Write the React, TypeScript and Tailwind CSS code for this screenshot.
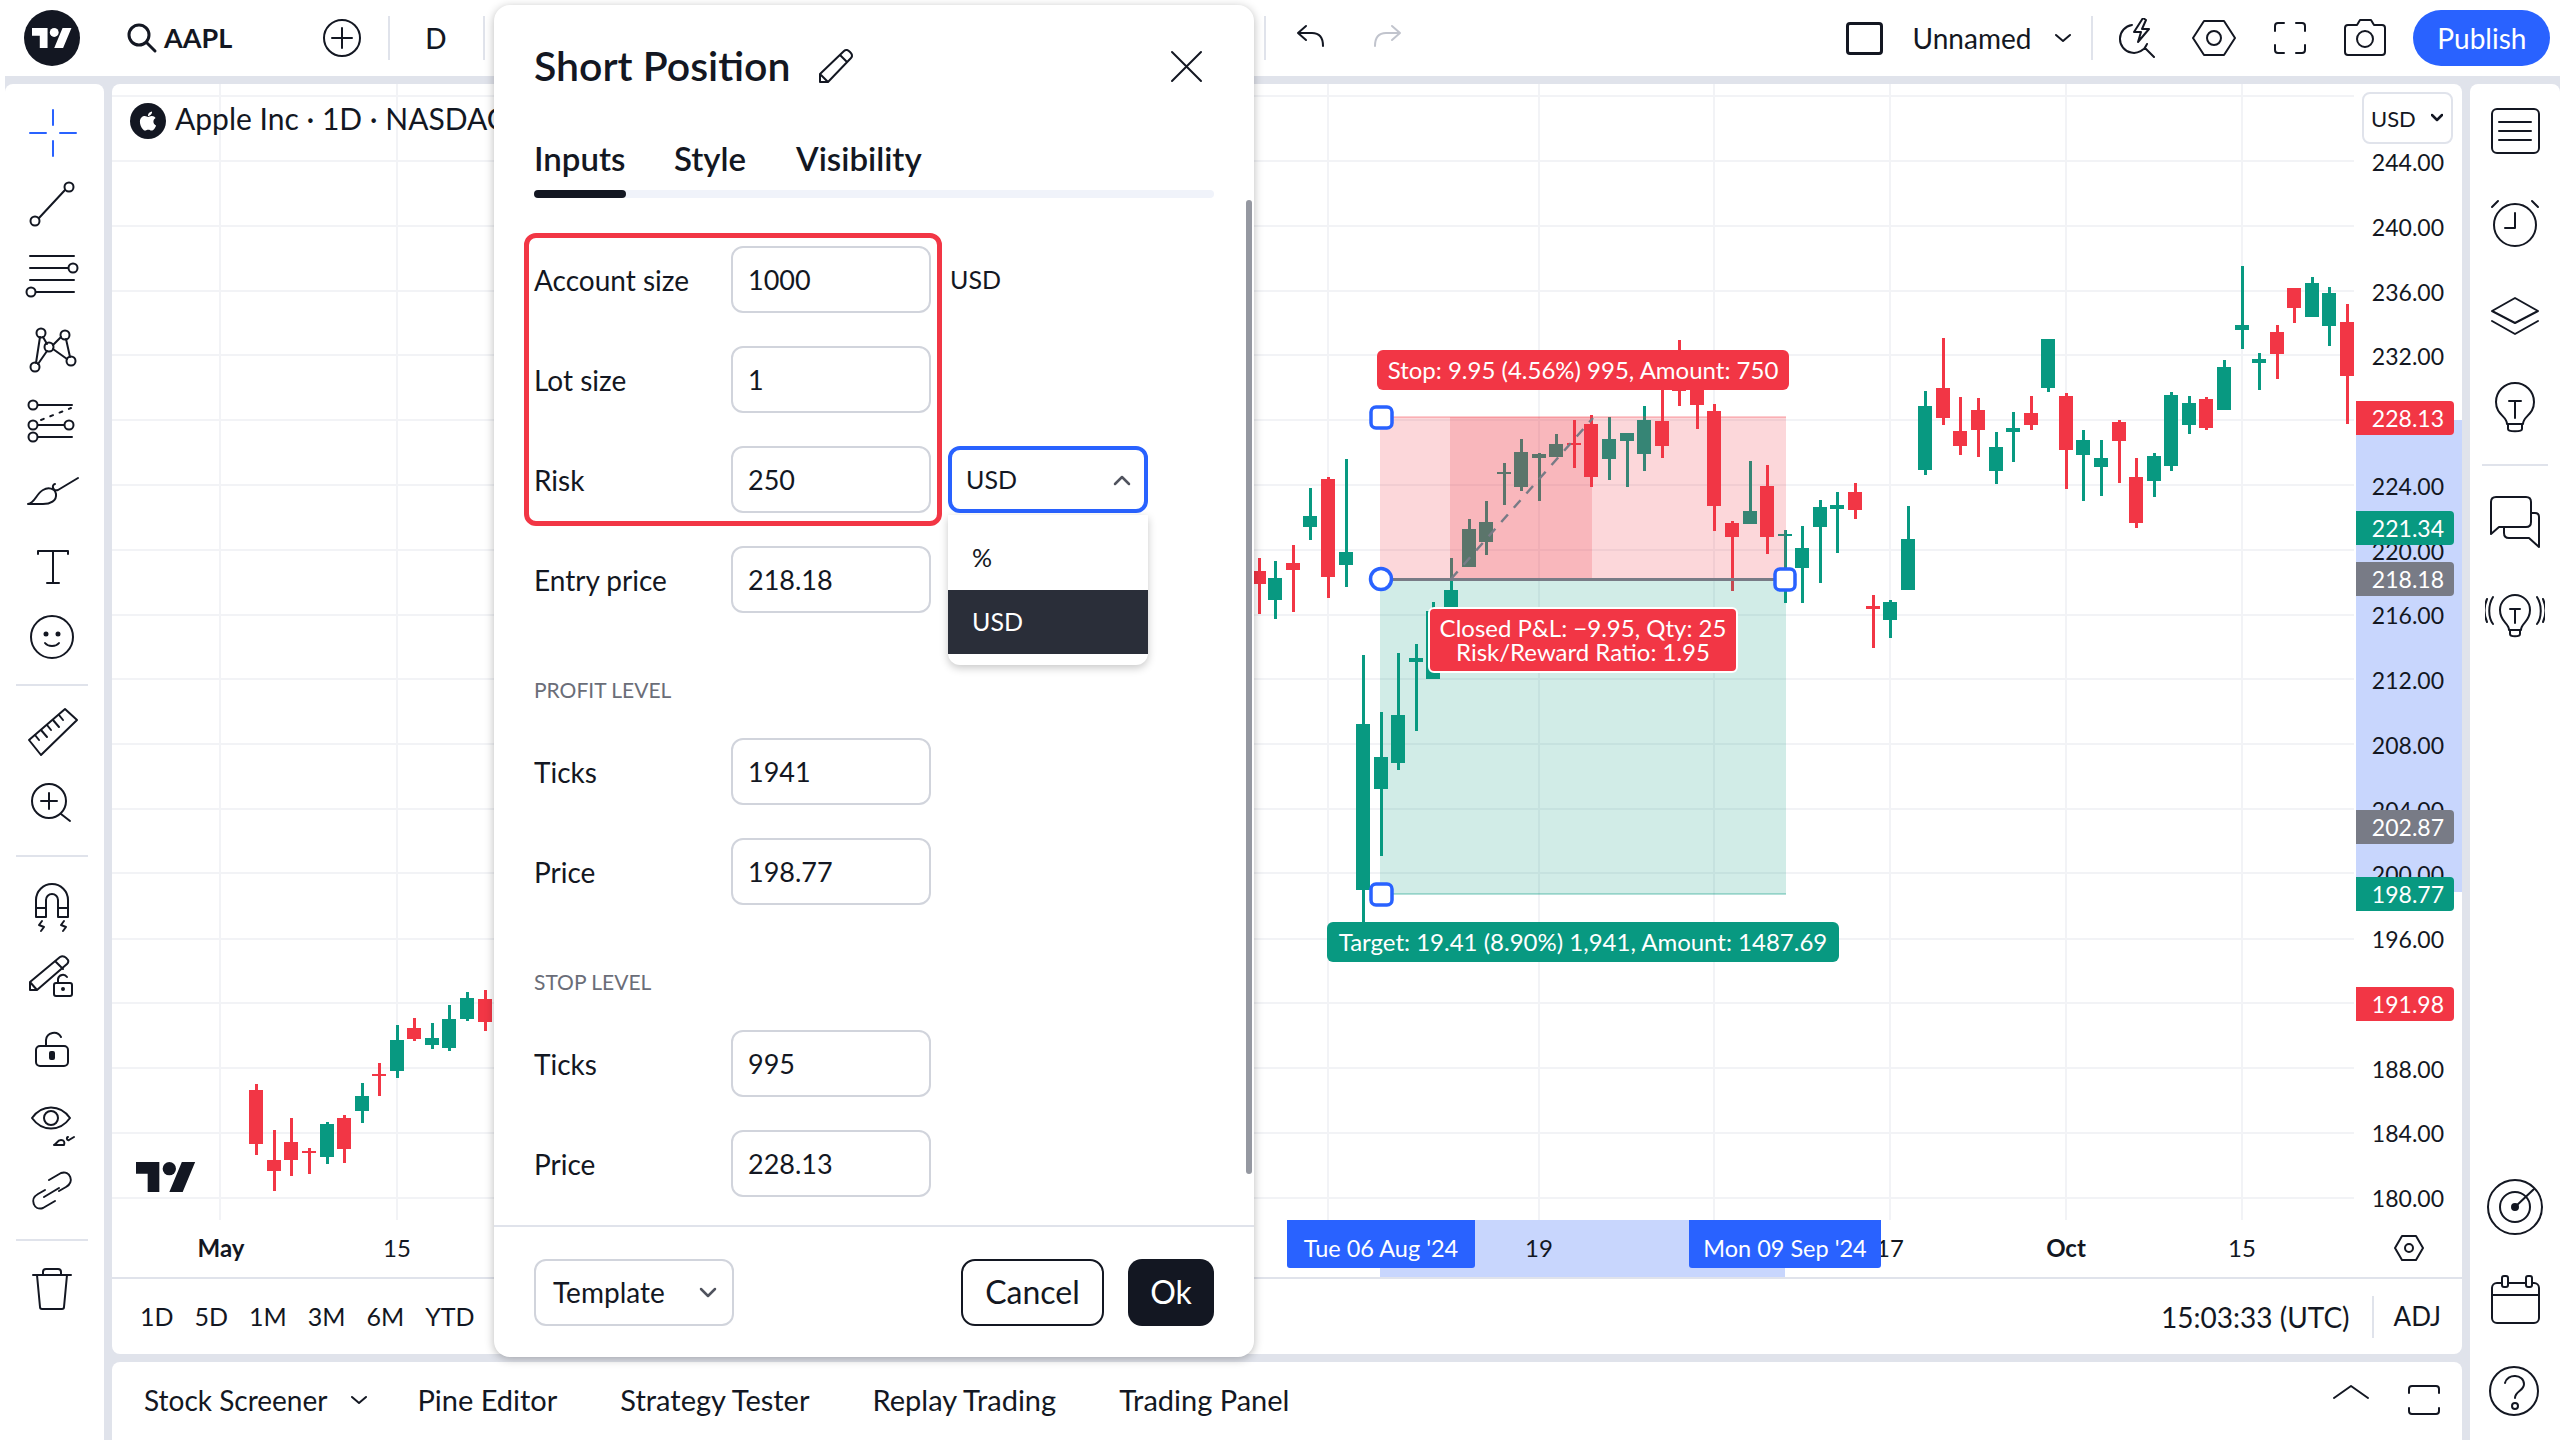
import React from 'react';
import { FaApple } from 'react-icons/fa';

const RED = '#f23645';
const GREEN = '#089981';

// x, wick top, wick bottom, body top, body bottom, red? (page coordinates)
type Candle = [number, number, number, number, number, 0 | 1];
const CANDLES: Candle[] = [
  [256, 1084, 1155, 1090, 1144, 1], [274, 1130, 1191, 1160, 1171, 1], [291, 1118, 1176, 1142, 1160, 1],
  [309, 1148, 1174, 1151, 1153, 1], [327, 1122, 1164, 1124, 1157, 0], [344, 1115, 1163, 1118, 1149, 1],
  [362, 1083, 1123, 1096, 1111, 0], [379, 1063, 1096, 1074, 1076, 1], [397, 1025, 1078, 1040, 1071, 0],
  [414, 1018, 1041, 1028, 1039, 1], [432, 1023, 1049, 1038, 1045, 0], [449, 1005, 1051, 1019, 1048, 0],
  [467, 992, 1021, 998, 1019, 0], [485, 990, 1031, 999, 1022, 1],
  [1259, 558, 614, 571, 584, 1], [1275, 561, 619, 578, 600, 0], [1293, 545, 612, 563, 570, 1],
  [1310, 488, 540, 516, 527, 0], [1328, 477, 598, 479, 577, 1], [1346, 459, 587, 552, 565, 0],
  [1363, 655, 922, 724, 890, 0], [1381, 712, 856, 757, 789, 0], [1398, 653, 770, 715, 763, 0],
  [1416, 644, 731, 658, 662, 0], [1433, 602, 679, 611, 679, 0], [1451, 558, 608, 590, 608, 0],
  [1469, 519, 567, 529, 567, 0], [1486, 501, 555, 522, 542, 0], [1504, 463, 505, 472, 474, 0],
  [1521, 439, 491, 452, 487, 0], [1539, 453, 501, 454, 458, 0], [1556, 434, 457, 444, 457, 0],
  [1574, 420, 468, 443, 445, 1], [1591, 415, 487, 424, 477, 1], [1609, 417, 480, 439, 459, 0],
  [1627, 433, 487, 433, 441, 0], [1644, 406, 471, 420, 454, 0], [1662, 385, 458, 421, 446, 1],
  [1679, 340, 406, 372, 391, 1], [1697, 372, 429, 378, 405, 1], [1714, 404, 531, 411, 506, 1],
  [1732, 521, 591, 523, 537, 1], [1750, 461, 524, 511, 524, 0], [1767, 465, 554, 486, 537, 1],
  [1785, 530, 603, 534, 536, 0], [1802, 526, 603, 548, 568, 0], [1820, 500, 583, 507, 527, 0],
  [1837, 492, 553, 505, 509, 0], [1855, 483, 519, 492, 510, 1], [1873, 595, 648, 606, 609, 1],
  [1890, 600, 638, 602, 620, 0], [1908, 506, 590, 539, 590, 0], [1925, 391, 475, 406, 470, 0],
  [1943, 338, 425, 388, 418, 1], [1960, 397, 455, 431, 446, 1], [1978, 398, 457, 410, 430, 1],
  [1996, 432, 484, 447, 471, 0], [2013, 412, 462, 428, 432, 0], [2031, 396, 430, 413, 425, 1],
  [2048, 339, 392, 339, 388, 0], [2066, 393, 489, 396, 450, 1], [2083, 430, 501, 440, 455, 0],
  [2101, 440, 496, 458, 467, 0], [2119, 420, 483, 422, 441, 1], [2136, 458, 528, 477, 523, 1],
  [2154, 453, 497, 456, 481, 0], [2171, 392, 471, 395, 466, 0], [2189, 396, 434, 403, 425, 0],
  [2206, 397, 430, 399, 428, 1], [2224, 360, 410, 367, 410, 0], [2242, 266, 349, 325, 330, 0],
  [2259, 353, 390, 359, 363, 0], [2277, 325, 379, 332, 354, 1], [2294, 288, 323, 288, 308, 1],
  [2312, 277, 317, 283, 317, 0], [2329, 287, 346, 293, 326, 0], [2347, 304, 424, 322, 376, 1],
];

const GRID_X = [220, 397, 1328, 1539, 1714, 1890, 2066, 2242];
const GRID_Y = [96, 161, 226, 291, 355, 420, 485, 550, 615, 679, 744, 809, 873, 939, 1003, 1068, 1133, 1198];

const PRICES = [244, 240, 236, 232, 224, 220, 216, 212, 208, 204, 200, 196, 188, 184, 180];
const priceY = (p: number) => 162 + (244 - p) * 16.19;

const TAGS = [
  { label: '228.13', top: 401, bg: RED, h: 34 },
  { label: '221.34', top: 511, bg: GREEN, h: 34 },
  { label: '218.18', top: 562, bg: '#787b86', h: 34 },
  { label: '202.87', top: 810, bg: '#787b86', h: 34 },
  { label: '198.77', top: 877, bg: GREEN, h: 34 },
  { label: '191.98', top: 987, bg: RED, h: 34 },
];

const Ico: React.FC<{ size?: number; color?: string; sw?: number; children: React.ReactNode }> = ({
  size = 60,
  color = '#131722',
  sw = 2,
  children,
}) => (
  <svg width={size} height={size} viewBox={`0 0 ${size} ${size}`} fill="none" stroke={color} strokeWidth={sw} strokeLinecap="round" strokeLinejoin="round">
    {children}
  </svg>
);

const TvMark: React.FC<{ w: number; h: number; fill: string }> = ({ w, h, fill }) => (
  <svg width={w} height={h} viewBox="0 4 36 18" fill={fill}>
    <path d="M14 22H7V11H0V4h14v18zM28 22h-8l7.5-18h8L28 22z" />
    <circle cx="20" cy="8" r="4" />
  </svg>
);

const TOOLS_A: React.ReactNode[] = [
  <Ico key="cross" color="#2962ff">
    <path d="M31 7v15M31 38v15M8 30h16M38 30h16" />
  </Ico>,
  <Ico key="line">
    <g transform="translate(0 -3)">
      <circle cx="13" cy="49" r="4.5" /><circle cx="47" cy="15" r="4.5" /><path d="M17 46 43 18" />
    </g>
  </Ico>,
  <Ico key="lines">
    <path d="M8 9h44M8 21h38M8 33h44M14 45h38" /><circle cx="51" cy="21" r="4.5" /><circle cx="9" cy="45" r="4.5" />
  </Ico>,
  <Ico key="xabcd">
    <circle cx="19" cy="14" r="4.5" /><circle cx="43" cy="16" r="4.5" /><circle cx="27" cy="28" r="4.5" /><circle cx="13" cy="48" r="4.5" /><circle cx="49" cy="42" r="4.5" />
    <path d="M18 18 14 44M21 18l4 7M16 45l9-13M31 26l8-8M31 30l14 10M44 20l4 18" />
  </Ico>,
  <Ico key="fib">
    <g transform="translate(0 4)">
      <path d="M16 10h34M16 30h26M16 42h34" /><circle cx="11" cy="10" r="4.5" /><circle cx="11" cy="30" r="4.5" /><circle cx="47" cy="30" r="4.5" /><circle cx="11" cy="42" r="4.5" />
      <path d="M19 25l30-12" strokeDasharray="3 7" />
    </g>
  </Ico>,
  <Ico key="brush">
    <path d="M6 41c7-1 8-10 15-14 5-3 12-2 13 4 1 7-6 10-13 10H6ZM33 21c-4 1-2 8 3 6l20-12" />
  </Ico>,
  <Ico key="text">
    <path d="M16 19v-3h30v3M31 16v32M25 48h12" />
  </Ico>,
  <Ico key="smile">
    <circle cx="30" cy="30" r="21" /><circle cx="24" cy="27" r="1.5" fill="#131722" /><circle cx="36" cy="27" r="1.5" fill="#131722" /><path d="M23 36c3 4 11 4 14 0" />
  </Ico>,
];

const TOOLS_B: React.ReactNode[] = [
  <Ico key="ruler">
    <g transform="translate(0 1)">
      <path d="M7 37 43 6l12 11-36 35L7 37Z" />
      <path d="m13 32 4 5M19 27l6 7M25 22l4 5M31 17l6 7M37 12l4 5" />
    </g>
  </Ico>,
  <Ico key="zoom">
    <circle cx="27" cy="27" r="17" /><path d="M27 19v16M19 27h16M39 40l9 7" />
  </Ico>,
];

const TOOLS_C: React.ReactNode[] = [
  <Ico key="magnet">
    <g transform="translate(0 3)">
      <path d="M14 37V20a16 16 0 0 1 32 0v17H36V20a6 6 0 0 0-12 0v17H14ZM14 28h10M36 28h10" />
      <path d="M20 41l-3 4 5 2-3 4M42 41l-3 4 5 2-3 4" />
    </g>
  </Ico>,
  <Ico key="pencil-lock">
    <g transform="translate(0 -4)">
      <path d="M8 46V38L38 13c3-2 6 0 8 3 1 2 0 3-1 4L15 46H8ZM33 17l8 8M8 38l7 8" />
      <rect x="32" y="39" width="18" height="13" rx="2" /><path d="M36 39v-4a5 5 0 0 1 9-2" /><circle cx="41" cy="45" r="1" fill="#131722" />
    </g>
  </Ico>,
  <Ico key="lock">
    <rect x="14" y="27" width="32" height="20" rx="4" /><path d="M24 27v-6a8 8 0 0 1 15-3" /><rect x="28" y="33" width="4" height="7" fill="#131722" rx="1" />
  </Ico>,
  <Ico key="eye">
    <g transform="translate(0 6)">
      <path d="M10 22c10-14 28-14 38 0-10 14-28 14-38 0Z" /><circle cx="29" cy="22" r="7" />
      <path d="M32 49c3-1 3-5 7-5 3 0 4 2 3 5h-10ZM46 41c-2 0-1 4 1 3l5-3" />
    </g>
  </Ico>,
  <Ico key="link">
    <path d="M23 29 16 33c-9 5-4 17 5 14l12-7M37 30l7-4c9-5 4-17-5-14l-12 7M22 36l15-9" />
  </Ico>,
];

const RIGHT_TOP: React.ReactNode[] = [
  <Ico key="list">
    <rect x="7" y="8" width="47" height="44" rx="5" /><path d="M14 21h32M14 30h32M14 39h32" />
  </Ico>,
  <Ico key="alarm">
    <circle cx="30" cy="32" r="21" /><path d="M30 20v15H20M7 14l6-6M53 14l-6-6" />
  </Ico>,
  <Ico key="layers">
    <path d="m30 13 23 13-23 12L7 26l23-13ZM7 36l23 13 23-13" />
  </Ico>,
  <Ico key="bulb">
    <path d="M22 47c0-8-11-9-11-22a19 19 0 0 1 38 0c0 13-11 14-11 22H22ZM23 47v5c0 3 14 3 14 0v-5M24 24h12M30 24v17" />
  </Ico>,
];

const RIGHT_MID: React.ReactNode[] = [
  <Ico key="chat">
    <path d="M6 42V10c0-3 2-5 5-5h30c3 0 5 2 5 5v20c0 3-2 5-5 5H14l-8 7ZM46 21h4c3 0 4 2 4 4v30l-10-9H24c-3 0-5-2-5-5v-6" />
  </Ico>,
  <Ico key="signal">
    <path d="M24 48c0-7-9-8-9-20a15 15 0 0 1 30 0c0 12-9 13-9 20H24ZM25 48v4c0 3 10 3 10 0v-4M25 27h10M30 27v14M8 15c-5 8-5 20 0 27M2 17c-3 7-3 16 0 23M52 15c5 8 5 20 0 27M58 17c3 7 3 16 0 23" />
  </Ico>,
];

const RIGHT_BOTTOM: React.ReactNode[] = [
  <Ico key="target">
    <circle cx="30" cy="30" r="27" /><circle cx="30" cy="30" r="15" /><circle cx="30" cy="30" r="3" fill="#131722" /><path d="M30 30 49 12" />
  </Ico>,
  <Ico key="calendar">
    <rect x="7" y="14" width="47" height="40" rx="5" /><path d="M7 26h47" /><rect x="17" y="7" width="6" height="11" rx="2" fill="#fff" /><rect x="41" y="7" width="6" height="11" rx="2" fill="#fff" />
  </Ico>,
  <Ico key="help">
    <circle cx="29" cy="30" r="24" /><path d="M20 22c2-10 19-9 19 1 0 7-9 7-9 14" /><circle cx="30" cy="45" r="3" />
  </Ico>,
];

const Slot: React.FC<{ h: string; children: React.ReactNode }> = ({ h, children }) => (
  <div className={`${h} flex items-center justify-center`}>{children}</div>
);

const ToolDivider: React.FC<{ h: string }> = ({ h }) => (
  <div className={`${h} flex items-center justify-center`}>
    <div className="h-[2px] w-[72px] bg-[#e0e3eb]" />
  </div>
);

const LeftToolbar = () => (
  <div className="w-[99px] shrink-0 rounded-t-[8px] bg-white pr-[5px] pt-[13px]">
    {TOOLS_A.map((t, i) => (
      <Slot key={i} h="h-[72px]">{t}</Slot>
    ))}
    <ToolDivider h="h-[23px]" />
    {TOOLS_B.map((t, i) => (
      <Slot key={i} h="h-[72px]">{t}</Slot>
    ))}
    <ToolDivider h="h-[31px]" />
    {TOOLS_C.map((t, i) => (
      <Slot key={i} h="h-[71px]">{t}</Slot>
    ))}
    <ToolDivider h="h-[28px]" />
    <Slot h="h-[72px]">
      <Ico>
        <path d="M11 15h38M15 15l3 32c0 1 1 2 2 2h20c1 0 2-1 2-2l3-32M21 15v-3c0-2 1-3 3-3h12c2 0 3 1 3 3v3" />
      </Ico>
    </Slot>
  </div>
);

const RightToolbar = () => (
  <div className="flex flex-1 flex-col rounded-t-[8px] bg-white pb-[3px] pt-[1px]">
    {RIGHT_TOP.map((t, i) => (
      <Slot key={i} h="h-[92px]">{t}</Slot>
    ))}
    <div className="flex h-[24px] items-center justify-center">
      <div className="h-[2px] w-[66px] bg-[#e0e3eb]" />
    </div>
    {RIGHT_MID.map((t, i) => (
      <Slot key={i} h="h-[90px]">{t}</Slot>
    ))}
    <div className="mt-auto">
      {RIGHT_BOTTOM.map((t, i) => (
        <Slot key={i} h="h-[92px]">{t}</Slot>
      ))}
    </div>
  </div>
);

const TopBar = () => (
  <div className="flex h-[76px] shrink-0 items-center bg-white text-[28px] text-[#131722]">
    <div className="ml-[24px] flex h-[56px] w-[56px] items-center justify-center rounded-full bg-[#131722]">
      <TvMark w={40} h={20} fill="#fff" />
    </div>
    <div className="ml-[46px] flex items-center">
      <Ico size={32}>
        <circle cx="13" cy="13" r="10" strokeWidth={3} /><path d="m21 21 8 8" strokeWidth={3} />
      </Ico>
      <span className="ml-[6px] text-[27px] font-bold">AAPL</span>
    </div>
    <div className="ml-[90px]">
      <Ico size={40}>
        <circle cx="20" cy="20" r="18" /><path d="M20 10v20M10 20h20" />
      </Ico>
    </div>
    <div className="ml-[26px] h-[44px] w-[2px] bg-[#e0e3eb]" />
    <span className="ml-[35px] font-medium">D</span>
    <div className="ml-[36px] h-[44px] w-[2px] bg-[#e0e3eb]" />
    <div className="ml-[779px] h-[44px] w-[2px] bg-[#e0e3eb]" />
    <div className="ml-[30px]">
      <Ico size={30}>
        <path d="M10 3 2 10l8 7M2 10h14c7 0 11 4 11 13" />
      </Ico>
    </div>
    <div className="ml-[46px]">
      <Ico size={30} color="#c1c4cd">
        <path d="m20 3 8 7-8 7M28 10H14C7 10 3 14 3 23" />
      </Ico>
    </div>
    <div className="ml-[444px] h-[33px] w-[37px] rounded-[4px] border-[3px] border-[#131722]" />
    <span className="ml-[30px]">Unnamed</span>
    <div className="ml-[24px]">
      <Ico size={16}>
        <path d="m1 5 7 6 7-6" />
      </Ico>
    </div>
    <div className="ml-[20px] h-[44px] w-[2px] bg-[#e0e3eb]" />
    <div className="ml-[25px]">
      <Ico size={40}>
        <path d="M14 7a14 14 0 1 0 15 19M25 0l-9 14h7l-3 10 11-13h-7l4-9-3-2ZM27 30l9 9" />
      </Ico>
    </div>
    <div className="ml-[34px]">
      <Ico size={44}>
        <path d="M12 5h20l11 17-11 17H12L1 22 12 5Z" /><circle cx="22" cy="22" r="7" />
      </Ico>
    </div>
    <div className="ml-[36px]">
      <Ico size={36}>
        <path d="M3 11V6c0-2 1-3 3-3h6M24 3h6c2 0 3 1 3 3v5M33 25v5c0 2-1 3-3 3h-6M12 33H6c-2 0-3-1-3-3v-5" />
      </Ico>
    </div>
    <div className="ml-[35px]">
      <Ico size={44}>
        <path d="M2 12c0-2 1-3 3-3h9l3-5h11l3 5h8c2 0 3 1 3 3v24c0 2-1 3-3 3H5c-2 0-3-1-3-3V12Z" /><circle cx="22" cy="23" r="8" />
      </Ico>
    </div>
    <button className="ml-[26px] flex h-[56px] w-[137px] items-center justify-center rounded-full bg-[#2962ff] text-[28px] text-white">
      Publish
    </button>
  </div>
);

const ChartDrawing = () => (
  <svg className="absolute inset-0" width={2244} height={1136} viewBox="112 84 2244 1136" shapeRendering="crispEdges">
    {GRID_X.map((x) => (
      <rect key={x} x={x - 1} y={84} width={2} height={1136} fill="#f2f3f6" />
    ))}
    {GRID_Y.map((y) => (
      <rect key={y} x={112} y={y - 1} width={2242} height={2} fill="#f2f3f6" />
    ))}
    {CANDLES.map(([x, wt, wb, bt, bb, red]) => (
      <g key={x} fill={red ? RED : GREEN}>
        <rect x={x - 1} y={wt} width={3} height={wb - wt} />
        <rect x={x - 7} y={bt} width={14} height={bb - bt} />
      </g>
    ))}
    <rect x={1380} y={417} width={406} height={162} fill={RED} fillOpacity={0.2} />
    <rect x={1450} y={417} width={142} height={162} fill={RED} fillOpacity={0.2} />
    <rect x={1380} y={579} width={406} height={315} fill={GREEN} fillOpacity={0.19} />
    <rect x={1380} y={416} width={406} height={2} fill={RED} fillOpacity={0.25} />
    <rect x={1380} y={893} width={406} height={2} fill={GREEN} fillOpacity={0.3} />
    <g shapeRendering="auto">
      <path d="M1451 579 1593 418" stroke="#787b86" strokeWidth={2.5} strokeDasharray="10 9" fill="none" />
      <rect x={1380} y={578} width={406} height={3} fill="#787b86" />
      <rect x={1371} y={407} width={21} height={21} rx={5} fill="#fff" stroke="#2962ff" strokeWidth={3.5} />
      <ellipse cx={1381} cy={579} rx={10.5} ry={10.5} fill="#fff" stroke="#2962ff" strokeWidth={3.5} />
      <rect x={1775} y={569} width={20} height={21} rx={5} fill="#fff" stroke="#2962ff" strokeWidth={3.5} />
      <rect x={1371} y={884} width={21} height={21} rx={5} fill="#fff" stroke="#2962ff" strokeWidth={3.5} />
    </g>
  </svg>
);

const ChartCanvas = () => (
  <div className="relative w-[2244px] shrink-0 overflow-hidden">
    <ChartDrawing />
    <div className="absolute left-[18px] top-[14px] flex items-center">
      <div className="flex h-[36px] w-[36px] items-center justify-center rounded-full bg-[#131722]">
        <FaApple className="text-[22px] text-white" />
      </div>
      <span className="ml-[9px] -translate-y-[2px] whitespace-nowrap text-[30px] text-[#131722]">Apple Inc · 1D · NASDAQ</span>
    </div>
    <div className="absolute left-[24px] top-[1078px]">
      <TvMark w={60} h={30} fill="#131722" />
    </div>
    <div className="absolute left-[1265px] top-[266px] flex h-[40px] w-[412px] items-center justify-center rounded-[6px] bg-[#f23645] text-[24px] text-white">
      Stop: 9.95 (4.56%) 995, Amount: 750
    </div>
    <div className="absolute left-[1316px] top-[523px] flex h-[66px] w-[310px] flex-col items-center justify-center rounded-[6px] border-2 border-white bg-[#f23645] text-[24px] leading-[24px] text-white">
      <span>Closed P&amp;L: −9.95, Qty: 25</span>
      <span>Risk/Reward Ratio: 1.95</span>
    </div>
    <div className="absolute left-[1215px] top-[838px] flex h-[40px] w-[512px] items-center justify-center rounded-[6px] bg-[#089981] text-[24px] text-white">
      Target: 19.41 (8.90%) 1,941, Amount: 1487.69
    </div>
  </div>
);

const PriceAxis = () => (
  <div className="relative flex-1 overflow-hidden text-[23px] text-[#131722]">
    <div className="absolute left-0 right-0 top-[336px] h-[472px] bg-[#c8d6fd]" />
    {PRICES.map((p) => (
      <div
        key={p}
        className="absolute right-[18px] -translate-y-1/2 leading-none"
        style={{ top: priceY(p) - 84 }}
      >
        {p.toFixed(2)}
      </div>
    ))}
    {TAGS.map((t) => (
      <div
        key={t.label}
        className="absolute left-0 flex w-[98px] items-center justify-end rounded-r-[4px] pr-[10px] text-[23px] text-white"
        style={{ top: t.top - 84, height: t.h, backgroundColor: t.bg }}
      >
        {t.label}
      </div>
    ))}
    <div className="absolute left-[6px] top-[8px] flex h-[52px] w-[91px] items-center justify-between rounded-[8px] border-[2px] border-[#e0e3eb] bg-white pl-[7px] pr-[8px] text-[22px]">
      USD
      <Ico size={12} sw={2.5}>
        <path d="m1 3 5 5 5-5" />
      </Ico>
    </div>
  </div>
);

const TimeAxis = () => (
  <div className="relative h-[59px] shrink-0 border-b-2 border-[#e0e3eb] text-[24px] text-[#131722]">
    <div className="absolute left-[1268px] top-0 h-[57px] w-[405px] bg-[#c8d6fd]" />
    <span className="absolute left-[109px] top-[28px] -translate-x-1/2 -translate-y-1/2 font-bold">May</span>
    <span className="absolute left-[285px] top-[28px] -translate-x-1/2 -translate-y-1/2">15</span>
    <span className="absolute left-[1427px] top-[28px] -translate-x-1/2 -translate-y-1/2">19</span>
    <span className="absolute left-[1778px] top-[28px] -translate-x-1/2 -translate-y-1/2">17</span>
    <span className="absolute left-[1954px] top-[28px] -translate-x-1/2 -translate-y-1/2 font-bold">Oct</span>
    <span className="absolute left-[2130px] top-[28px] -translate-x-1/2 -translate-y-1/2">15</span>
    <div className="absolute left-[1175px] top-0 flex h-[48px] w-[188px] items-center justify-center rounded-b-[3px] bg-[#2962ff] pt-[9px] text-[23.5px] text-white">
      Tue 06 Aug '24
    </div>
    <div className="absolute left-[1577px] top-0 flex h-[48px] w-[192px] items-center justify-center rounded-b-[3px] bg-[#2962ff] pt-[9px] text-[23.5px] text-white">
      Mon 09 Sep '24
    </div>
    <div className="absolute left-[2282px] top-[13px]">
      <Ico size={30}>
        <path d="M8 3h14l7 12-7 12H8L1 15 8 3Z" /><circle cx="15" cy="15" r="4" />
      </Ico>
    </div>
  </div>
);

const RangeBar = () => (
  <div className="flex flex-1 items-center pl-[28px] pr-[21px] text-[25px] text-[#131722]">
    {['1D', '5D', '1M', '3M', '6M', 'YTD'].map((r) => (
      <span key={r} className="mr-[21px]">{r}</span>
    ))}
    <span className="ml-auto text-[28px]">15:03:33 (UTC)</span>
    <div className="ml-[22px] h-[42px] w-[2px] bg-[#e0e3eb]" />
    <span className="ml-[20px] text-[26px]">ADJ</span>
  </div>
);

const BottomPanel = () => (
  <div className="flex h-[78px] shrink-0 items-center rounded-t-[8px] bg-white pb-[2px] pl-[32px] pr-[21px] text-[29px] text-[#131722]">
    <span className="text-[28px]">Stock Screener</span>
    <div className="ml-[24px]">
      <Ico size={16}>
        <path d="m1 5 7 6 7-6" />
      </Ico>
    </div>
    <span className="ml-[50px]">Pine Editor</span>
    <span className="ml-[63px]">Strategy Tester</span>
    <span className="ml-[63px]">Replay Trading</span>
    <span className="ml-[63px]">Trading Panel</span>
    <div className="ml-auto">
      <Ico size={36}>
        <path d="m1 16 17-12 17 12" />
      </Ico>
    </div>
    <div className="ml-[38px]">
      <Ico size={34}>
        <path d="M2 10V6c0-2 1-3 3-3h24c2 0 3 1 3 3v4M32 25v3c0 2-1 3-3 3H5c-2 0-3-1-3-3v-3" />
      </Ico>
    </div>
  </div>
);

const Field: React.FC<{ value: string }> = ({ value }) => (
  <input
    readOnly
    value={value}
    className="h-[67px] w-[200px] rounded-[12px] border-[2px] border-[#d1d4dc] bg-white px-[15px] text-[27px] text-[#131722] outline-none"
  />
);

const Row: React.FC<{ label: string; value: string; children?: React.ReactNode }> = ({ label, value, children }) => (
  <div className="relative mb-[33px] flex h-[67px] items-center text-[28px] text-[#131722]">
    <span className="w-[197px] shrink-0">{label}</span>
    <Field value={value} />
    {children}
  </div>
);

const SectionHead: React.FC<{ children: React.ReactNode }> = ({ children }) => (
  <div className="mb-[4px] flex h-[88px] items-center text-[21px] uppercase text-[#6a6d78]">{children}</div>
);

const PositionDialog = () => (
  <div className="absolute left-[494px] top-[5px] flex h-[1352px] w-[760px] flex-col rounded-[16px] bg-white shadow-[0_2px_10px_rgba(0,0,0,0.28)]">
    <div className="flex h-[122px] shrink-0 items-center pl-[40px] pr-[51px]">
      <span className="text-[41px] font-semibold text-[#131722]">Short Position</span>
      <div className="ml-[27px]">
        <Ico size={36}>
          <path d="M2 34v-8L26 3c2-2 4-1 6 1s3 4 1 6L10 34H2ZM22 7l7 7M2 26l8 8" />
        </Ico>
      </div>
      <div className="ml-auto">
        <Ico size={33}>
          <path d="m2 2 29 29M31 2 2 31" />
        </Ico>
      </div>
    </div>
    <div className="mx-[40px] flex h-[63px] shrink-0 items-center text-[33px] font-semibold text-[#131722]">
      <span className="w-[140px]">Inputs</span>
      <span className="w-[122px]">Style</span>
      <span>Visibility</span>
    </div>
    <div className="mx-[40px] h-[8px] shrink-0 rounded-full bg-[#f0f3fa]">
      <div className="h-[8px] w-[92px] rounded-full bg-[#131722]" />
    </div>
    <div className="relative min-h-0 flex-1 px-[40px] pt-[48px]">
      <Row label="Account size" value="1000">
        <span className="ml-[19px] text-[25px]">USD</span>
      </Row>
      <Row label="Lot size" value="1" />
      <Row label="Risk" value="250">
        <div className="ml-[17px] flex h-[67px] w-[200px] items-center justify-between rounded-[12px] border-[4px] border-[#2962ff] pl-[14px] pr-[12px] text-[25px]">
          USD
          <Ico size={20} color="#50535e" sw={2.5}>
            <path d="m3 14 7-7 7 7" />
          </Ico>
        </div>
        <div className="absolute left-[414px] top-[69px] z-10 w-[200px] rounded-b-[12px] bg-white pb-[11px] pt-[10px] text-[25px] shadow-[0_3px_8px_rgba(0,0,0,0.22)]">
          <div className="flex h-[65px] items-center pl-[24px]">%</div>
          <div className="flex h-[64px] items-center bg-[#2a2e39] pl-[24px] text-white">USD</div>
        </div>
      </Row>
      <Row label="Entry price" value="218.18" />
      <SectionHead>Profit level</SectionHead>
      <Row label="Ticks" value="1941" />
      <Row label="Price" value="198.77" />
      <SectionHead>Stop level</SectionHead>
      <Row label="Ticks" value="995" />
      <Row label="Price" value="228.13" />
      {/* red highlight round the first three rows */}
      <div className="pointer-events-none absolute left-[30px] top-[35px] h-[293px] w-[418px] rounded-[12px] border-[5px] border-[#f23645]" />
      <div className="absolute right-[2px] top-[2px] h-[974px] w-[6px] rounded-full bg-[#9598a1]" />
    </div>
    <div className="flex h-[132px] shrink-0 items-center border-t-2 border-[#e0e3eb] px-[40px] text-[28px] text-[#131722]">
      <div className="flex h-[67px] w-[200px] items-center justify-between rounded-[12px] border-[2px] border-[#d1d4dc] pl-[17px] pr-[14px]">
        Template
        <Ico size={20} color="#50535e" sw={2.5}>
          <path d="m3 7 7 7 7-7" />
        </Ico>
      </div>
      <button className="ml-auto flex h-[67px] w-[143px] items-center justify-center rounded-[14px] border-[2px] border-[#131722] text-[32px]">
        Cancel
      </button>
      <button className="ml-[24px] flex h-[67px] w-[86px] items-center justify-center rounded-[14px] bg-[#131722] text-[32px] text-white">
        Ok
      </button>
    </div>
  </div>
);

export default function App() {
  return (
    <div className="relative flex h-[1440px] w-[2560px] flex-col overflow-hidden bg-white font-['Lato',sans-serif]">
      <TopBar />
      <div className="ml-[5px] flex flex-1 gap-[8px] bg-[#e0e3eb] pt-[8px]">
        <LeftToolbar />
        <div className="flex w-[2350px] shrink-0 flex-col gap-[8px]">
          <div className="flex h-[1270px] shrink-0 flex-col overflow-hidden rounded-[8px] bg-white">
            <div className="flex h-[1136px] shrink-0">
              <ChartCanvas />
              <PriceAxis />
            </div>
            <TimeAxis />
            <RangeBar />
          </div>
          <div className="flex-1">
            <BottomPanel />
          </div>
        </div>
        <RightToolbar />
      </div>
      <PositionDialog />
    </div>
  );
}
